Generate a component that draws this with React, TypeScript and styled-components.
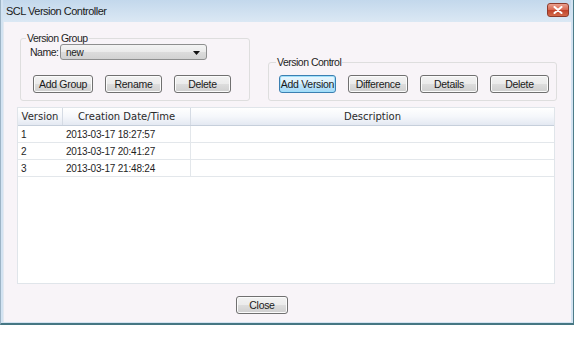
import React from "react";
import styled, { createGlobalStyle } from "styled-components";

const GlobalStyle = createGlobalStyle`
  html, body {
    margin: 0;
    padding: 0;
    background: #ffffff;
  }
  body {
    font-family: "Liberation Sans", Arial, sans-serif;
    font-size: 10.5px;
    color: #1e1e1e;
  }
`;

const versions = [
  { id: 1, date: "2013-03-17 18:27:57", description: "" },
  { id: 2, date: "2013-03-17 20:41:27", description: "" },
  { id: 3, date: "2013-03-17 21:48:24", description: "" },
];

const App: React.FC = () => {
  return (
    <>
      <GlobalStyle />
      <Window>
        <TitleBar>
          <Title>SCL Version Controller</Title>
          <CloseX aria-label="Close">
            <svg width="10" height="8" viewBox="0 0 10 8">
              <path
                d="M1.5 1 L8.5 7 M8.5 1 L1.5 7"
                stroke="#ffffff"
                strokeWidth="2"
                strokeLinecap="round"
              />
            </svg>
          </CloseX>
        </TitleBar>

        <Client>
          <TopRow>
            <GroupBox $width={230} $pl={5}>
              <Legend>Version Group</Legend>
              <NameRow>
                <NameLabel>Name:</NameLabel>
                <Combo>
                  <span>new</span>
                  <svg width="7" height="4" viewBox="0 0 7 4">
                    <path d="M0 0 H7 L3.5 4 Z" fill="#111" />
                  </svg>
                </Combo>
              </NameRow>
              <ButtonRow $top={15} $pl={7}>
                <Button $w={60}>Add Group</Button>
                <Button $w={57}>Rename</Button>
                <Button $w={57}>Delete</Button>
              </ButtonRow>
            </GroupBox>

            <GroupBox $width={289} $pl={7}>
              <Legend>Version Control</Legend>
              <ButtonRow $top={6} $pl={3}>
                <Button $w={57} $focused>
                  Add Version
                </Button>
                <Button $w={60}>Difference</Button>
                <Button $w={58}>Details</Button>
                <Button $w={59}>Delete</Button>
              </ButtonRow>
            </GroupBox>
          </TopRow>

          <Table>
            <HeaderRow>
              <HeaderCell $divider>Version</HeaderCell>
              <HeaderCell $divider>Creation Date/Time</HeaderCell>
              <HeaderCell>Description</HeaderCell>
            </HeaderRow>
            {versions.map((v) => (
              <Row key={v.id}>
                <Cell>{v.id}</Cell>
                <Cell $divider>{v.date}</Cell>
                <Cell>{v.description}</Cell>
              </Row>
            ))}
          </Table>

          <Footer>
            <Button $w={52} $h={18}>
              Close
            </Button>
          </Footer>
        </Client>
      </Window>
    </>
  );
};

const Window = styled.div`
  width: 574px;
  height: 325px;
  box-sizing: border-box;
  display: flex;
  flex-direction: column;
  background: #d3e3f2;
  border-left: 1px solid #9db4c6;
  border-right: 1px solid #4d7c89;
  border-bottom: 2px solid #467783;
  padding: 0 2px 1px 2px;
`;

const TitleBar = styled.div`
  height: 22px;
  flex: none;
  display: flex;
  align-items: center;
  justify-content: space-between;
  padding: 0 2px 0 3px;
  background: linear-gradient(to bottom, #c3d8ec, #dbe8f4);
`;

const Title = styled.div`
  font-size: 11px;
  letter-spacing: -0.5px;
  color: #1a1a1a;
  padding-bottom: 1px;
`;

const CloseX = styled.div`
  width: 22px;
  height: 14px;
  margin-top: -2px;
  box-sizing: border-box;
  display: flex;
  align-items: center;
  justify-content: center;
  border: 1px solid #8e3b2c;
  border-radius: 3px;
  background: linear-gradient(to bottom, #e9a08f 0%, #d7664f 50%, #c0422b 51%, #d36a4a 100%);
`;

const Client = styled.div`
  flex: 1;
  display: flex;
  flex-direction: column;
  background: #f8f4f8;
  border-left: 1px solid #e4e9f0;
  padding: 10px 14px 0 13px;
`;

const TopRow = styled.div`
  display: flex;
  align-items: flex-end;
  gap: 18px;
  padding-left: 3px;
`;

const GroupBox = styled.fieldset<{ $width: number; $pl: number }>`
  width: ${(p) => p.$width}px;
  box-sizing: border-box;
  margin: 0;
  padding: 0 0 7px ${(p) => p.$pl}px;
  border: 1px solid #dedede;
  border-radius: 3px;
  min-width: 0;
`;

const Legend = styled.legend`
  padding: 0 1px;
  font-size: 10.5px;
  line-height: 13px;
  letter-spacing: -0.5px;
  color: #1e1e1e;
`;

const NameRow = styled.div`
  display: flex;
  align-items: center;
  gap: 4px;
  margin-top: -1px;
  padding-left: 4px;
`;

const NameLabel = styled.span`
  width: 26px;
  font-size: 10.5px;
  letter-spacing: -0.5px;
`;

const Combo = styled.div`
  width: 147px;
  height: 16px;
  box-sizing: border-box;
  display: flex;
  align-items: center;
  justify-content: space-between;
  padding: 1px 6px 0 5px;
  border: 1px solid #8e8f8f;
  border-radius: 3px;
  background: linear-gradient(to bottom, #f4f4f4 0%, #eaeaea 50%, #dcdcdc 51%, #d2d2d2 100%);
  font-size: 10px;
  letter-spacing: -0.3px;
`;

const ButtonRow = styled.div<{ $top: number; $pl: number }>`
  display: flex;
  gap: 12px;
  margin-top: ${(p) => p.$top}px;
  padding-left: ${(p) => p.$pl}px;
`;

const Button = styled.button<{ $w: number; $h?: number; $focused?: boolean }>`
  width: ${(p) => p.$w}px;
  height: ${(p) => p.$h ?? 18}px;
  box-sizing: border-box;
  padding: 0;
  white-space: nowrap;
  font-family: "Liberation Sans", Arial, sans-serif;
  font-size: 10.5px;
  letter-spacing: -0.3px;
  color: #1a1a1a;
  border: 1px solid ${(p) => (p.$focused ? "#3c7fb1" : "#707070")};
  border-radius: 3px;
  background: ${(p) =>
    p.$focused
      ? "linear-gradient(to bottom, #eaf6fd 0%, #d9f0fc 50%, #bee6fd 51%, #a7d9f5 100%)"
      : "linear-gradient(to bottom, #f2f2f2 0%, #ebebeb 50%, #dddddd 51%, #cfcfcf 100%)"};
  box-shadow: inset 0 0 0 1px ${(p) => (p.$focused ? "#9fe0fb" : "#fbfbfb")};
`;

const Table = styled.div`
  width: 538px;
  height: 177px;
  box-sizing: border-box;
  margin-top: 6px;
  background: #ffffff;
  border: 1px solid #e0e5ea;
  display: flex;
  flex-direction: column;
`;

const columns = "45px 128px 1fr";

const HeaderRow = styled.div`
  display: grid;
  grid-template-columns: ${columns};
  height: 18px;
  flex: none;
  box-sizing: border-box;
  background: linear-gradient(to bottom, #ffffff 0%, #f5f7fb 50%, #e4e9f2 100%);
  border-bottom: 1px solid #c6cfdb;
`;

const HeaderCell = styled.div<{ $divider?: boolean }>`
  display: flex;
  align-items: center;
  justify-content: center;
  font-family: "DejaVu Sans", sans-serif;
  font-size: 10px;
  color: #2a2a2a;
  border-right: ${(p) => (p.$divider ? "1px solid #d5dbe4" : "none")};
`;

const Row = styled.div`
  display: grid;
  grid-template-columns: ${columns};
  height: 17px;
  flex: none;
  box-sizing: border-box;
  border-bottom: 1px solid #e3e7eb;
`;

const Cell = styled.div<{ $divider?: boolean }>`
  display: flex;
  align-items: center;
  padding-left: 3px;
  font-size: 10px;
  letter-spacing: -0.2px;
  color: #1e1e1e;
  border-right: ${(p) => (p.$divider ? "1px solid #e3e7eb" : "none")};
`;

const Footer = styled.div`
  display: flex;
  margin-top: 12px;
  padding-left: 219px;
`;

export default App;
